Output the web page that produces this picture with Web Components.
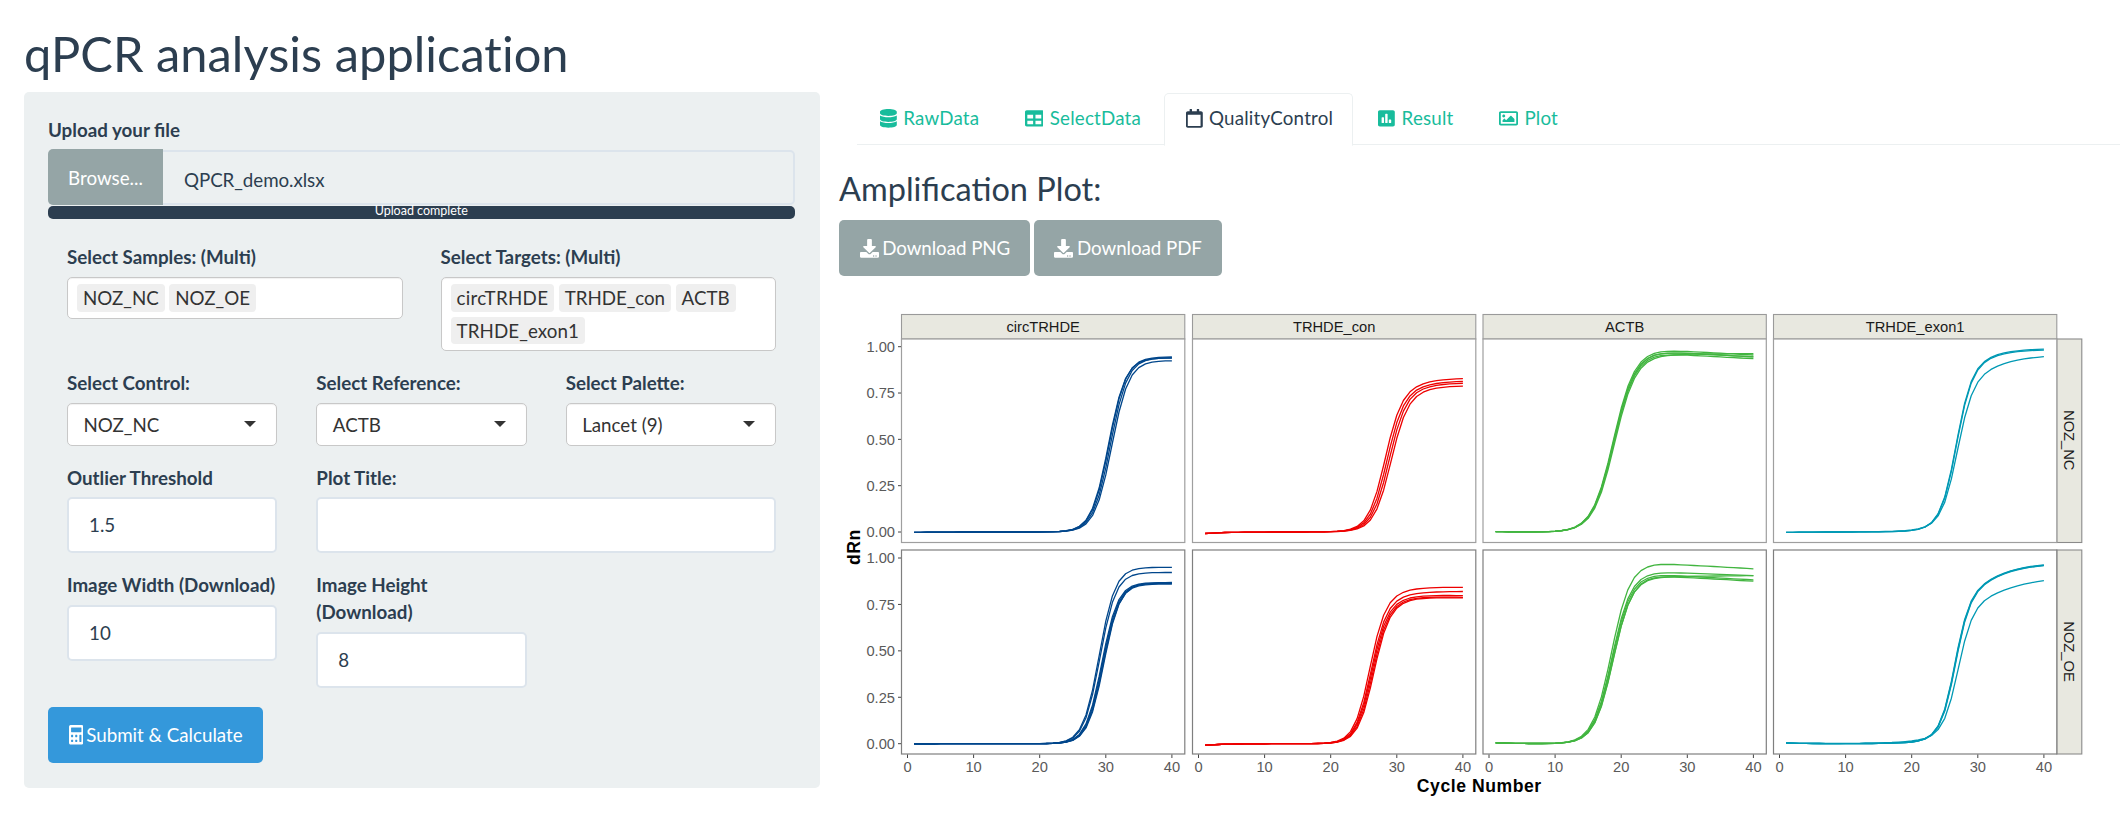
<!DOCTYPE html>
<html lang="en"><head><meta charset="utf-8"><title>qPCR analysis application</title>
<style>
html,body{margin:0;padding:0;background:#fff;overflow:hidden}
body{font:18.75px/1.42857 Lato,"Noto Sans",sans-serif;color:#2c3e50}
</style></head><body>
<qpcr-app>
  <span slot="title">qPCR analysis application</span>
  <q-well slot="left">
    <q-upload file="QPCR_demo.xlsx" status="Upload complete"><span slot="label">Upload your file</span></q-upload>
    <q-grid cols="2">
      <q-field><span slot="label">Select Samples: (Multi)</span><q-chips><q-chip>NOZ_NC</q-chip><q-chip>NOZ_OE</q-chip></q-chips></q-field>
      <q-field><span slot="label">Select Targets: (Multi)</span><q-chips><q-chip style="letter-spacing:.3px">circTRHDE</q-chip><q-chip style="letter-spacing:-.05px">TRHDE_con</q-chip><q-chip>ACTB</q-chip><q-chip style="letter-spacing:.1px">TRHDE_exon1</q-chip></q-chips></q-field>
    </q-grid>
    <q-grid cols="3">
      <q-field><span slot="label">Select Control:</span><q-select>NOZ_NC</q-select></q-field>
      <q-field><span slot="label">Select Reference:</span><q-select>ACTB</q-select></q-field>
      <q-field><span slot="label">Select Palette:</span><q-select>Lancet (9)</q-select></q-field>
      <q-field><span slot="label">Outlier Threshold</span><q-input>1.5</q-input></q-field>
      <q-field style="grid-column:span 2"><span slot="label">Plot Title:</span><q-input></q-input></q-field>
      <q-field><span slot="label">Image Width (Download)</span><q-input>10</q-input></q-field>
      <q-field><span slot="label">Image Height (Download)</span><q-input>8</q-input></q-field>
    </q-grid>
    <q-button kind="primary" icon="calculator" class="submit">Submit &amp; Calculate</q-button>
  </q-well>
  <div slot="right">
    <q-tabs>
      <q-tab icon="database">RawData</q-tab>
      <q-tab icon="table">SelectData</q-tab>
      <q-tab icon="calendar" active>QualityControl</q-tab>
      <q-tab icon="poll">Result</q-tab>
      <q-tab icon="image">Plot</q-tab>
    </q-tabs>
    <q-panel>
      <span slot="heading">Amplification Plot:</span>
      <q-button slot="actions" kind="default" icon="download">Download PNG</q-button>
      <q-button slot="actions" kind="default" icon="download">Download PDF</q-button>
      <q-plot slot="plot"></q-plot>
    </q-panel>
  </div>
</qpcr-app>
<script>
const ICONS={
database:['0 0 448 512','M448 73.143v45.714C448 159.143 347.667 192 224 192S0 159.143 0 118.857V73.143C0 32.857 100.333 0 224 0s224 32.857 224 73.143zM448 176v102.857C448 319.143 347.667 352 224 352S0 319.143 0 278.857V176c48.125 33.143 136.208 48.572 224 48.572S399.874 209.143 448 176zm0 160v102.857C448 479.143 347.667 512 224 512S0 479.143 0 438.857V336c48.125 33.143 136.208 48.572 224 48.572S399.874 369.143 448 336z'],
table:['0 0 512 512','M464 32H48C21.49 32 0 53.49 0 80v352c0 26.51 21.49 48 48 48h416c26.51 0 48-21.49 48-48V80c0-26.51-21.49-48-48-48zM224 416H64v-96h160v96zm0-160H64v-96h160v96zm224 160H288v-96h160v96zm0-160H288v-96h160v96z'],
calendar:['0 0 448 512','M400 64h-48V12c0-6.6-5.4-12-12-12h-40c-6.6 0-12 5.4-12 12v52H160V12c0-6.6-5.4-12-12-12h-40c-6.6 0-12 5.4-12 12v52H48C21.5 64 0 85.5 0 112v352c0 26.5 21.5 48 48 48h352c26.5 0 48-21.5 48-48V112c0-26.5-21.5-48-48-48zm-6 400H54c-3.3 0-6-2.7-6-6V160h340v298c0 3.3-2.7 6-6 6z'],
poll:['0 0 448 512','M400 32H48C21.5 32 0 53.5 0 80v352c0 26.5 21.5 48 48 48h352c26.5 0 48-21.5 48-48V80c0-26.5-21.5-48-48-48zM160 368c0 8.84-7.16 16-16 16h-32c-8.84 0-16-7.16-16-16V240c0-8.84 7.16-16 16-16h32c8.84 0 16 7.16 16 16v128zm96 0c0 8.84-7.16 16-16 16h-32c-8.84 0-16-7.16-16-16V144c0-8.84 7.16-16 16-16h32c8.84 0 16 7.16 16 16v224zm96 0c0 8.84-7.16 16-16 16h-32c-8.84 0-16-7.16-16-16v-64c0-8.84 7.16-16 16-16h32c8.84 0 16 7.16 16 16v64z'],
image:['0 0 512 512','M464 64H48C21.49 64 0 85.49 0 112v288c0 26.51 21.49 48 48 48h416c26.51 0 48-21.49 48-48V112c0-26.51-21.49-48-48-48zm-6 336H54a6 6 0 0 1-6-6V118a6 6 0 0 1 6-6h404a6 6 0 0 1 6 6v276a6 6 0 0 1-6 6zM128 152c-22.091 0-40 17.909-40 40s17.909 40 40 40 40-17.909 40-40-17.909-40-40-40zM96 352h320v-80l-87.515-87.515c-4.686-4.686-12.284-4.686-16.971 0L192 304l-39.515-39.515c-4.686-4.686-12.284-4.686-16.971 0L96 304v48z'],
download:['0 0 512 512','M216 0h80c13.3 0 24 10.7 24 24v168h87.7c17.8 0 26.7 21.5 14.1 34.1L269.7 378.3c-7.5 7.5-19.8 7.5-27.3 0L90.1 226.1c-12.6-12.6-3.7-34.1 14.1-34.1H192V24c0-13.3 10.7-24 24-24zm296 376v112c0 13.3-10.7 24-24 24H24c-13.3 0-24-10.7-24-24V376c0-13.3 10.7-24 24-24h146.7l49 49c20.1 20.1 52.5 20.1 72.6 0l49-49H488c13.3 0 24 10.7 24 24zm-124 88c0-11-9-20-20-20s-20 9-20 20 9 20 20 20 20-9 20-20zm64 0c0-11-9-20-20-20s-20 9-20 20 9 20 20 20 20-9 20-20z'],
calculator:['0 0 448 512','M400 0H48C22.4 0 0 22.4 0 48v416c0 25.6 22.4 48 48 48h352c25.6 0 48-22.4 48-48V48c0-25.6-22.4-48-48-48zM128 435.2c0 6.4-6.4 12.8-12.8 12.8H76.8c-6.4 0-12.8-6.4-12.8-12.8v-38.4c0-6.4 6.4-12.8 12.8-12.8h38.4c6.4 0 12.8 6.4 12.8 12.8v38.4zm0-128c0 6.4-6.4 12.8-12.8 12.8H76.8c-6.4 0-12.8-6.4-12.8-12.8v-38.4c0-6.4 6.4-12.8 12.8-12.8h38.4c6.4 0 12.8 6.4 12.8 12.8v38.4zm128 128c0 6.4-6.4 12.8-12.8 12.8h-38.4c-6.4 0-12.8-6.4-12.8-12.8v-38.4c0-6.4 6.4-12.8 12.8-12.8h38.4c6.4 0 12.8 6.4 12.8 12.8v38.4zm0-128c0 6.4-6.4 12.8-12.8 12.8h-38.4c-6.4 0-12.8-6.4-12.8-12.8v-38.4c0-6.4 6.4-12.8 12.8-12.8h38.4c6.4 0 12.8 6.4 12.8 12.8v38.4zm128 128c0 6.4-6.4 12.8-12.8 12.8h-38.4c-6.4 0-12.8-6.4-12.8-12.8V268.8c0-6.4 6.4-12.8 12.8-12.8h38.4c6.4 0 12.8 6.4 12.8 12.8v166.4zm0-256c0 6.4-6.4 12.8-12.8 12.8H76.8c-6.4 0-12.8-6.4-12.8-12.8V76.8C64 70.4 70.4 64 76.8 64h294.4c6.4 0 12.8 6.4 12.8 12.8v102.4z']
};
const iconSvg=(n,w,h)=>{const[v,d]=ICONS[n];return `<svg viewBox="${v}" width="${w}" height="${h}" preserveAspectRatio="none" fill="currentColor" aria-hidden="true"><path d="${d}"/></svg>`};
function def(name,html){customElements.define(name,class extends HTMLElement{
  constructor(){super();this.attachShadow({mode:'open'}).innerHTML=typeof html==='function'?html(this):html}
  connectedCallback(){ if(typeof html==='function'){this.shadowRoot.innerHTML=html(this)} }
})}
def('qpcr-app',`<style>
:host{display:block;height:840px;overflow:hidden;box-sizing:border-box;padding:27px 0 0 24px}
h1{margin:0 0 11.4px;font:400 48.75px/53.6px Lato,sans-serif;letter-spacing:.05px;color:#2c3e50}
.cols{display:grid;grid-template-columns:796px 1281px;column-gap:19px}
</style><h1><slot name="title"></slot></h1><div class="cols"><slot name="left"></slot><slot name="right"></slot></div>`);
def('q-well',`<style>
:host{display:block;box-sizing:border-box;height:696px;background:#ecf0f1;border-radius:5px;padding:25px 24px}
::slotted(q-grid){margin-left:19px;margin-right:20px}
::slotted(.submit){margin-top:0}
</style><slot></slot>`);
def('q-upload',h=>`<style>
:host{display:block;margin-bottom:25.5px}
.l{display:block;font-weight:700;margin-bottom:6.2px}
.g{display:flex;height:55px;box-sizing:border-box;border:2.5px solid #dce4ec;border-left:0;border-radius:5px;margin-right:1.5px}
.b{flex:0 0 115px;margin:-2.5px 0;padding-top:1.5px;background:#95a5a6;color:#fff;display:flex;align-items:center;justify-content:center;border-radius:5px 0 0 5px;box-sizing:border-box}
.f{padding:5px 0 0 21px;display:flex;align-items:center;color:#2c3e50;letter-spacing:-.06px}
.p{margin-top:1px;height:13px;background:#2c3e50;border-radius:5px;color:#fff;font-size:12.5px;line-height:12px;text-align:center;overflow:visible;position:relative;margin-right:1.5px}
.p span{position:relative;top:-1px}
</style><span class="l"><slot name="label"></slot></span><div class="g"><div class="b">Browse...</div><div class="f">${h.getAttribute('file')||''}</div></div><div class="p"><span>${h.getAttribute('status')||''}</span></div>`);
def('q-grid',h=>`<style>
:host{display:grid;grid-template-columns:repeat(${h.getAttribute('cols')||2},minmax(0,1fr));column-gap:${h.getAttribute('cols')==='2'?38:39}px;row-gap:18.75px;align-items:start;margin-bottom:19px}
</style><slot></slot>`);
def('q-field',`<style>
:host{display:block;min-width:0}
.l{display:block;font-weight:700;margin-bottom:6.2px}
</style><span class="l"><slot name="label"></slot></span><slot></slot>`);
def('q-chips',`<style>
:host{display:flex;flex-wrap:wrap;gap:4.5px;box-sizing:border-box;background:#fff;border:1.25px solid #c8c8c8;border-radius:5px;padding:6px 9px;box-shadow:inset 0 1px 1px rgba(0,0,0,.06)}
</style><slot></slot>`);
def('q-chip',`<style>
:host{display:block;background:#efefef;border-radius:4px;padding:0 6px;height:27.7px;line-height:28.5px;color:#333}
</style><slot></slot>`);
def('q-select',`<style>
:host{display:block;position:relative;box-sizing:border-box;height:42.5px;line-height:41.5px;background:#fff;border:1.25px solid #c8c8c8;border-radius:5px;padding-left:15.5px;color:#333;box-shadow:inset 0 1px 1px rgba(0,0,0,.06)}
i{position:absolute;right:20px;top:17px;border:6.25px solid transparent;border-top-color:#333;border-bottom:0}
</style><slot></slot><i></i>`);
def('q-input',`<style>
:host{display:block;box-sizing:border-box;height:56px;line-height:51px;background:#fff;border:2.5px solid #dce4ec;border-radius:5px;padding-left:20px;color:#2c3e50}
</style><slot></slot>`);
def('q-button',h=>{const p=h.getAttribute('kind')==='primary',ic=h.getAttribute('icon');return `<style>
:host{display:inline-flex;align-items:center;box-sizing:border-box;height:56px;background:${p?'#3498db':'#95a5a6'};color:#fff;border-radius:5px;padding:0 ${p?20.5:19.6}px 0 ${p?20.5:20.5}px;vertical-align:top;${p?'':'letter-spacing:-.06px;'}}
svg{margin-right:${p?3.2:3.7}px;flex:none}
</style>${p?iconSvg(ic,14.5,19.5):iconSvg(ic,19,18.75)}<slot></slot>`});
def('q-tabs',`<style>
:host{display:flex;margin-left:18px;margin-top:.7px;height:52.6px;box-sizing:border-box;border-bottom:1.25px solid #ecf0f1;gap:2.5px}
</style><slot></slot>`);
def('q-tab',h=>{const a=h.hasAttribute('active'),ic=h.getAttribute('icon');const w=ic==='table'?18.6:ic==='image'?19:16.8;return `<style>
:host{display:flex;align-items:center;box-sizing:border-box;height:53.6px;padding:0 20px 1.5px 23px;letter-spacing:.2px;color:${a?'#2c3e50':'#18bc9c'};${a?'background:#fff;border:1.25px solid #ecf0f1;border-bottom-color:#fff;border-radius:5px 5px 0 0;padding:0 18.7px 1.5px 21.2px;':''}}
svg{margin-right:6.4px;flex:none}
</style>${iconSvg(ic,w,18.75)}<slot></slot>`});
def('q-panel',`<style>
:host{display:block;padding-top:26.2px}
h3{margin:0 0 13.2px;font:400 32.5px/35.75px Lato,sans-serif;color:#2c3e50}
.a{display:flex;gap:4px}
</style><h3><slot name="heading"></slot></h3><div class="a"><slot name="actions"></slot></div><slot name="plot"></slot>`);
const COL={b:'#00468B',r:'#ED0000',g:'#42B540',t:'#0099B4'};
const P=[
 {c:COL.b,cv:[[.945,30.5,.77],[.94,30.7,.77],[.925,30.9,.77],[.94,30.4,.77]],b:-.002},
 {c:COL.r,cv:[[.83,28.2,.8,0,.88,31,.4],[.815,28.5,.8,0,.88,31,.4],[.805,28.8,.8,0,.88,31,.4],[.79,29.1,.8,0,.88,31,.4]],b:-.008},
 {c:COL.g,cv:[[.985,18.8,.62,.03],[.975,18.85,.62,.03],[.965,18.9,.62,.03],[.958,19,.62,-.005],[.975,18.9,.62,.03]],b:.002},
 {c:COL.t,cv:[[.99,26.7,.85,0,.85,29,.35],[.985,26.75,.85,0,.85,29,.35],[.955,26.9,.85,0,.8,30,.3]],b:-.002},
 {c:COL.b,cv:[[.95,29,.82,0],[.922,29.1,.82,0],[.868,29.4,.82,0],[.864,29.5,.82,0],[.866,29.7,.82,0],[.86,29.6,.82,0]],b:-.001},
 {c:COL.r,cv:[[.845,25.9,.85,.005,.92,29,.45],[.82,26.1,.85,0,.92,29,.45],[.803,26.2,.85,.01,.92,29,.45],[.795,26.35,.85,.012,.92,29,.45],[.79,26.5,.85,.008,.92,29,.45]],b:-.008},
 {c:COL.g,cv:[[.972,18.5,.7,.03],[.925,18.6,.7,.02],[.912,18.65,.7,.03],[.9,18.75,.7,-.005],[.905,18.8,.7,.03]],b:.005},
 {c:COL.t,cv:[[.972,26.5,.9,0,.78,30.5,.32],[.97,26.55,.9,0,.78,30.5,.32],[.968,26.6,.9,0,.78,30.5,.32],[.9,27,.9,0,.75,31,.25]],b:.004}
];
const cols=[901.5,1192.5,1483,1773.5], W=283.3, X0=6, XS=6.61;
const rows=[{t:339,b:542.5,z:532,s:185.3},{t:550,b:754,z:743.7,s:185.7}];
const L=(c,m,k)=>1/(1+Math.exp(-k*(c-m)));
function val(d,c,b){const[p,m,k,dr=0,w=1,m2=m,k2=k]=d;return p*(w*L(c,m,k)+(1-w)*L(c,m2,k2))-dr*Math.max(0,c-Math.max(25,m+6))/15+b*Math.exp(-(c-1)/3)}
def('q-plot',()=>{
 let s='',T=(x,y,t,a='')=>`<text x="${x}" y="${y}" ${a}>${t}</text>`;
 const names=['circTRHDE','TRHDE_con','ACTB','TRHDE_exon1'],rn=['NOZ_NC','NOZ_OE'];
 cols.forEach((x,i)=>{
  s+=`<rect x="${x}" y="314.5" width="${W}" height="24.5" fill="#E8E8E0" stroke="#9a9a9a" stroke-width="1.1"/>`;
  s+=T(x+W/2,332,names[i],'class="st" text-anchor="middle"');
 });
 rows.forEach((r,ri)=>{
  s+=`<rect x="2056.8" y="${r.t}" width="25" height="${r.b-r.t}" fill="#E8E8E0" stroke="#8a8a8a" stroke-width="1.1"/>`;
  const cy=(r.t+r.b)/2-.5;
  s+=T(2063.5,cy,rn[ri],`class="st" text-anchor="middle" transform="rotate(90 2063.5 ${cy})"`);
  cols.forEach((x,ci)=>{
   const pd=P[ri*4+ci];
   s+=`<rect x="${x}" y="${r.t}" width="${W}" height="${r.b-r.t}" fill="#fff"/>`;
   pd.cv.forEach(d=>{let pts=[];for(let c=1;c<=40;c++){pts.push((x+X0+c*XS).toFixed(1)+','+(r.z-val(d,c,pd.b)*r.s).toFixed(1))}
    s+=`<polyline points="${pts.join(' ')}" fill="none" stroke="${pd.c}" stroke-width="1.3" stroke-linejoin="round"/>`});
   s+=`<rect x="${x}" y="${r.t}" width="${W}" height="${r.b-r.t}" fill="none" stroke="${ri?'#7f7f7f':'#9f9f9f'}" stroke-width="1.2"/>`;
  });
  [0,.25,.5,.75,1].forEach(v=>{const y=r.z-v*r.s;
   s+=`<line x1="898" x2="901" y1="${y}" y2="${y}" stroke="#444" stroke-width="1"/>`;
   s+=T(895,y+5.3,v.toFixed(2),'class="tk" text-anchor="end"');
  });
 });
 cols.forEach(x=>{[0,10,20,30,40].forEach(c=>{const xx=x+X0+c*XS;
  s+=`<line x1="${xx}" x2="${xx}" y1="754.5" y2="758" stroke="#444" stroke-width="1"/>`;
  s+=T(xx,771.5,c,'class="tk" text-anchor="middle"');
 })});
 s+=T(1479.3,791.5,'Cycle Number','class="ax" text-anchor="middle" letter-spacing=".55"');
 s+=T(860,547,'dRn','class="ax" text-anchor="middle" letter-spacing=".55" transform="rotate(-90 860 547)"');
 return `<style>
:host{display:block;margin-top:13.3px}
svg{display:block}
text{font-family:"Liberation Sans",Arial,sans-serif}
.tk{font-size:14.7px;fill:#5a5a5a}
.st{font-size:14.7px;fill:#1a1a1a}
.ax{font-size:17.6px;font-weight:700;fill:#000}
</style><svg width="1260" height="510" viewBox="839 290 1260 510" role="img" aria-label="Amplification plot">${s}</svg>`});
</script>
</body></html>
